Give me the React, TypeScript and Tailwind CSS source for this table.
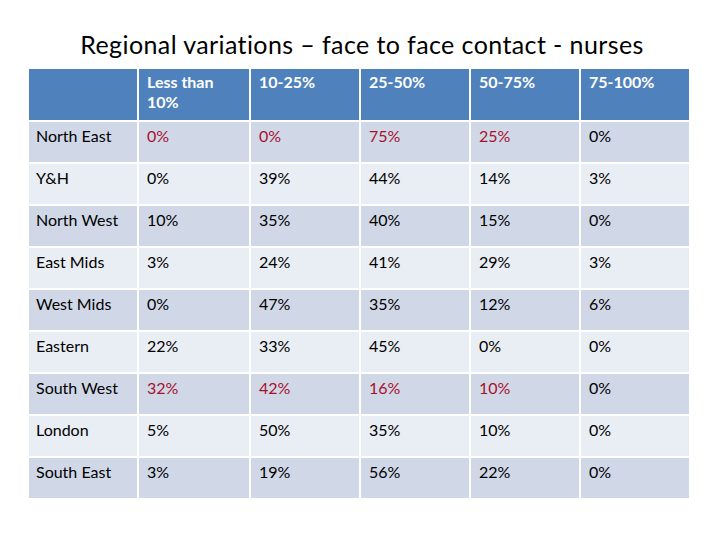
const header = ["", "Less than 10%", "10-25%", "25-50%", "50-75%", "75-100%"];

// [label, values, how many leading values are red]
const rows: [string, string[], number][] = [
  ["North East", ["0%", "0%", "75%", "25%", "0%"], 4],
  ["Y&H", ["0%", "39%", "44%", "14%", "3%"], 0],
  ["North West", ["10%", "35%", "40%", "15%", "0%"], 0],
  ["East Mids", ["3%", "24%", "41%", "29%", "3%"], 0],
  ["West Mids", ["0%", "47%", "35%", "12%", "6%"], 0],
  ["Eastern", ["22%", "33%", "45%", "0%", "0%"], 0],
  ["South West", ["32%", "42%", "16%", "10%", "0%"], 4],
  ["London", ["5%", "50%", "35%", "10%", "0%"], 0],
  ["South East", ["3%", "19%", "56%", "22%", "0%"], 0],
];

export default function App() {
  return (
    <div className="w-[720px] h-[540px] bg-white font-['Lato',sans-serif] relative overflow-hidden">
      {/* Title */}
      <h1 className="pt-[28px] h-[69px] text-center text-[25px] leading-[32px] tracking-[0.4px] text-black pl-[4px]">
        Regional variations – face to face contact - nurses
      </h1>

      {/* Table */}
      <div className="ml-[29px] w-[660px] grid grid-cols-[108px_110px_108px_108px_108px_108px] gap-[2px] text-[16px] leading-[20px]">
        {header.map((h, i) => (
          <div key={i} className="h-[51px] bg-[#4f81bd] text-white font-bold pl-[8px] pt-[3px] pr-[20px]">
            {h}
          </div>
        ))}
        {rows.map(([label, vals, red], r) => {
          const bg = r % 2 === 0 ? "bg-[#d0d8e8]" : "bg-[#e9edf4]";
          return [
            <div key={label} className={`h-[40px] ${bg} pl-[7px] pt-[4px] text-black`}>
              {label}
            </div>,
            ...vals.map((v, c) => (
              <div
                key={label + c}
                className={`h-[40px] ${bg} pl-[8px] pt-[4px] ${c < red ? "text-[#a8102a]" : "text-black"}`}
              >
                {v}
              </div>
            )),
          ];
        })}
      </div>
    </div>
  );
}
